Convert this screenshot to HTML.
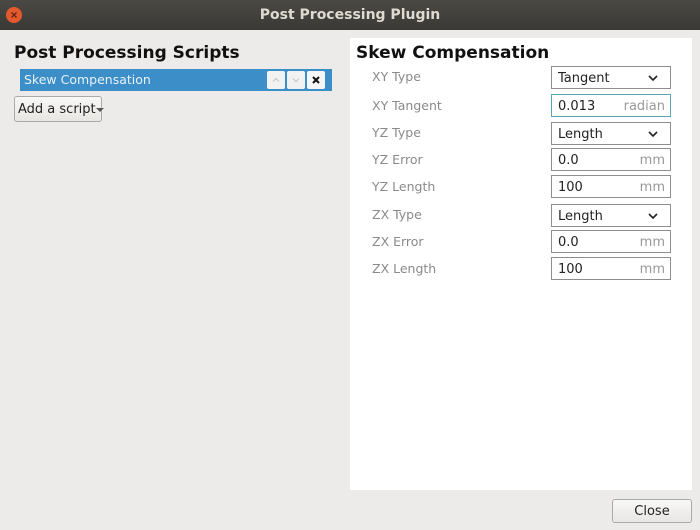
<html><head><style>
body{margin:0;width:700px;height:530px;background:#edebe9;font-family:"DejaVu Sans","Liberation Sans",sans-serif;position:relative;overflow:hidden}
.a{position:absolute;white-space:nowrap}
.tb{left:0;top:0;width:700px;height:30px;background:linear-gradient(#4a4944,#3a3935);color:#dfdbd2;font-size:14px;font-weight:bold;text-align:center;line-height:30px}
.h{font-weight:bold;font-size:17px;color:#111}
.lbl{left:372px;font-size:12.5px;color:#8a8a8a}
.box{left:551px;width:118px;height:21px;border:1px solid #8e8e8e;background:#fff;font-size:13px;color:#222;line-height:23px}
.box span.v{position:absolute;left:6px}
.box span.u{position:absolute;right:5px;color:#999}
.box svg{position:absolute;right:12px;top:8px}
</style></head><body>
<div class="a tb">Post Processing Plugin</div>
<div class="a" style="left:6px;top:7px;width:16px;height:16px;border-radius:50%;background:#e45a2e"><svg width="16" height="16"><path d="M5.5 5.5L10.5 10.5M10.5 5.5L5.5 10.5" stroke="#6a2410" stroke-width="1.3"/></svg></div>
<div class="a h" style="left:14px;top:43px">Post Processing Scripts</div>
<div class="a" style="left:20px;top:69px;width:312px;height:22px;background:#3b8ec8;color:#e8f2fa;font-size:12.5px;line-height:22px"><span style="margin-left:4px">Skew Compensation</span></div>
<div class="a" style="left:267px;top:71px;width:18px;height:18px;background:#f2f2f2;border-radius:2px"><svg width="18" height="18"><path d="M6 10.5L9 7.5L12 10.5" stroke="#c4c4c4" fill="none"/></svg></div>
<div class="a" style="left:287px;top:71px;width:18px;height:18px;background:#f2f2f2;border-radius:2px"><svg width="18" height="18"><path d="M6 7.5L9 10.5L12 7.5" stroke="#c4c4c4" fill="none"/></svg></div>
<div class="a" style="left:307px;top:71px;width:18px;height:18px;background:#f6f6f6;border-radius:2px"><svg width="18" height="18"><path d="M6 6L12 12M12 6L6 12" stroke="#111" stroke-width="2"/></svg></div>
<div class="a" style="left:14px;top:96px;width:86px;height:24px;border:1px solid #aaa;border-radius:3px;background:linear-gradient(#f8f8f7,#e8e6e3);font-size:13px;line-height:26px;color:#222"><span style="margin-left:3px">Add a script</span><svg width="8" height="6"><path d="M0 1L8 1L4 5Z" fill="#555"/></svg></div>
<div class="a" style="left:350px;top:38px;width:342px;height:452px;background:#fff"></div>
<div class="a h" style="left:356px;top:43px">Skew Compensation</div>
<div class="a lbl" style="top:69px">XY Type</div>
<div class="a lbl" style="top:98px">XY Tangent</div>
<div class="a lbl" style="top:125px">YZ Type</div>
<div class="a lbl" style="top:152px">YZ Error</div>
<div class="a lbl" style="top:179px">YZ Length</div>
<div class="a lbl" style="top:207px">ZX Type</div>
<div class="a lbl" style="top:234px">ZX Error</div>
<div class="a lbl" style="top:261px">ZX Length</div>
<div class="a box" style="top:66px"><span class="v">Tangent</span><svg width="10" height="6"><path d="M1 1L5 5L9 1" stroke="#222" stroke-width="1.6" fill="none"/></svg></div>
<div class="a box" style="top:94px;border-color:#5aa5b5"><span class="v">0.013</span><span class="u">radian</span></div>
<div class="a box" style="top:122px"><span class="v">Length</span><svg width="10" height="6"><path d="M1 1L5 5L9 1" stroke="#222" stroke-width="1.6" fill="none"/></svg></div>
<div class="a box" style="top:148px"><span class="v">0.0</span><span class="u">mm</span></div>
<div class="a box" style="top:175px"><span class="v">100</span><span class="u">mm</span></div>
<div class="a box" style="top:204px"><span class="v">Length</span><svg width="10" height="6"><path d="M1 1L5 5L9 1" stroke="#222" stroke-width="1.6" fill="none"/></svg></div>
<div class="a box" style="top:230px"><span class="v">0.0</span><span class="u">mm</span></div>
<div class="a box" style="top:257px"><span class="v">100</span><span class="u">mm</span></div>
<div class="a" style="left:612px;top:499px;width:78px;height:22px;border:1px solid #aaa;border-radius:3px;background:linear-gradient(#f8f8f7,#e8e6e3);font-size:13px;text-align:center;line-height:23px;color:#222">Close</div>
</body></html>
